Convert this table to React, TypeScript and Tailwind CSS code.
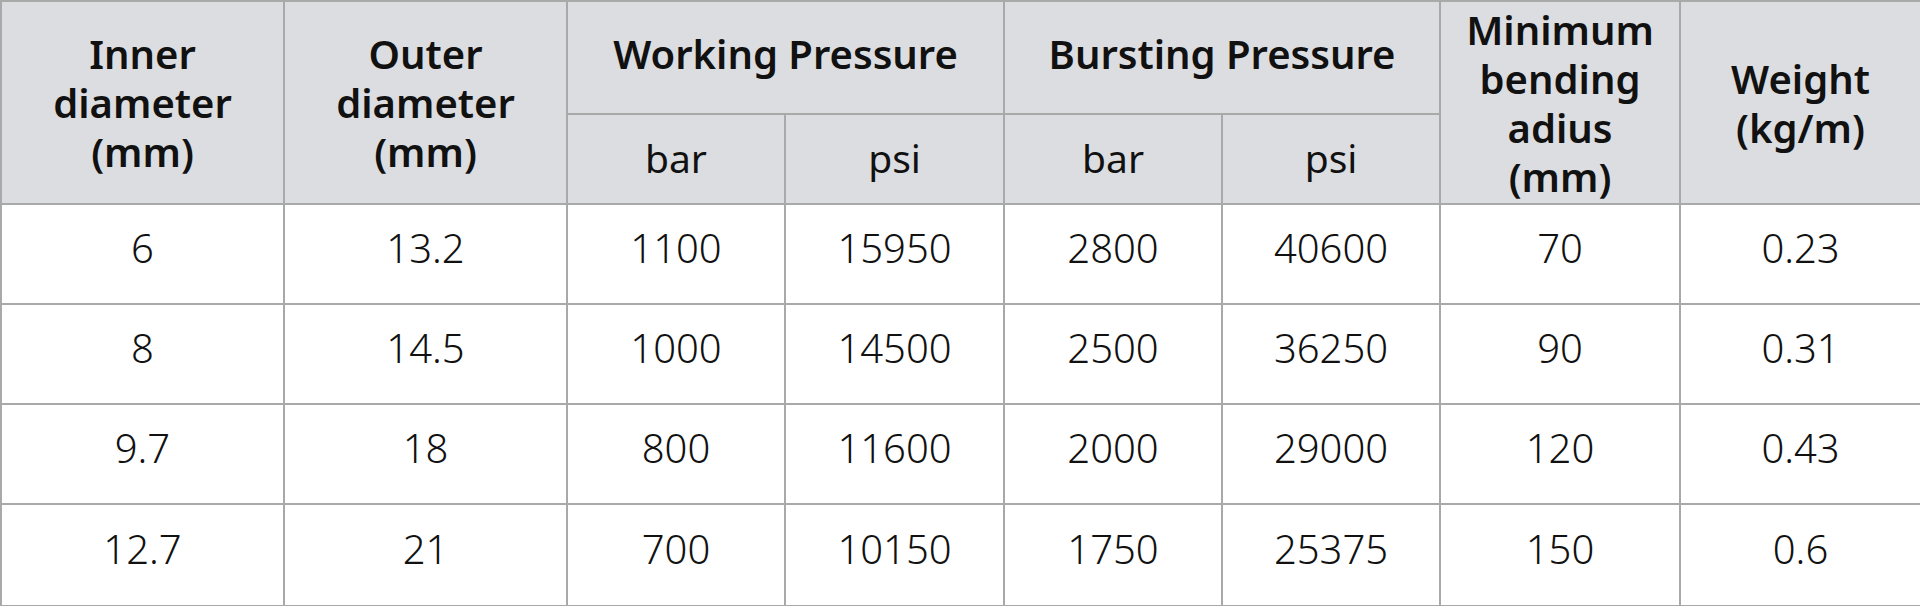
const rows = [
  ["6", "13.2", "1100", "15950", "2800", "40600", "70", "0.23"],
  ["8", "14.5", "1000", "14500", "2500", "36250", "90", "0.31"],
  ["9.7", "18", "800", "11600", "2000", "29000", "120", "0.43"],
  ["12.7", "21", "700", "10150", "1750", "25375", "150", "0.6"],
];

const cell = "border-2 border-[#a9a9a9] text-center align-middle";
const th = `${cell} bg-[#dcdde0] font-semibold`;
const sub = `${cell} bg-[#dcdde0] font-normal text-[39px] pb-1`;
const td = `${cell} bg-white font-light pb-3`;

export default function App() {
  return (
    <div className="w-[1920px] h-[606px] bg-white text-[#111] font-['Noto_Sans',sans-serif]">
      <table className="w-full table-fixed border-collapse">
        <colgroup>
          <col className="w-[283px]" />
          <col className="w-[283px]" />
          <col className="w-[218px]" />
          <col className="w-[219px]" />
          <col className="w-[218px]" />
          <col className="w-[218px]" />
          <col className="w-[240px]" />
          <col className="w-[241px]" />
        </colgroup>
        <thead className="text-[40px] leading-[49px]">
          <tr className="h-[113px]">
            <th rowSpan={2} className={th}>
              Inner
              <br />
              diameter
              <br />
              (mm)
            </th>
            <th rowSpan={2} className={th}>
              Outer
              <br />
              diameter
              <br />
              (mm)
            </th>
            <th colSpan={2} className={`${th} pb-2`}>
              Working Pressure
            </th>
            <th colSpan={2} className={`${th} pb-2`}>
              Bursting Pressure
            </th>
            <th rowSpan={2} className={th}>
              Minimum
              <br />
              bending
              <br />
              adius
              <br />
              (mm)
            </th>
            <th rowSpan={2} className={th}>
              Weight
              <br />
              (kg/m)
            </th>
          </tr>
          <tr className="h-[90px]">
            <th className={sub}>bar</th>
            <th className={sub}>psi</th>
            <th className={sub}>bar</th>
            <th className={sub}>psi</th>
          </tr>
        </thead>
        <tbody className="text-[40px]">
          {rows.map((r, i) => (
            <tr key={i} className={i === 3 ? "h-[102px]" : "h-[100px]"}>
              {r.map((v, j) => (
                <td key={j} className={td}>
                  {v}
                </td>
              ))}
            </tr>
          ))}
        </tbody>
      </table>
    </div>
  );
}
